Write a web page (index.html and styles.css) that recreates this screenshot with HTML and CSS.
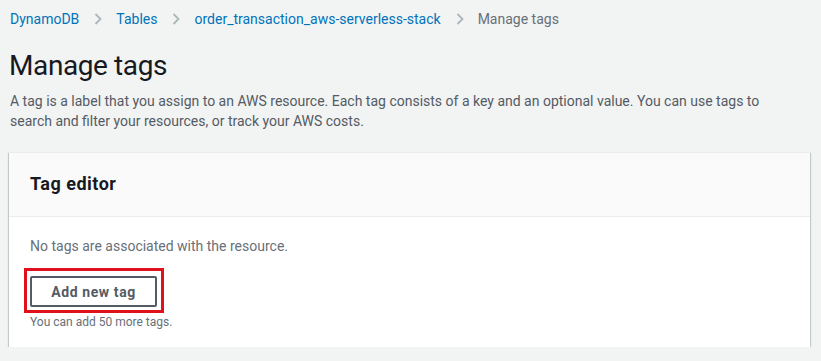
FILE: index.html
```html
<!DOCTYPE html>
<html lang="en">
<head>
    <meta charset="UTF-8">
    <meta name="viewport" content="width=device-width, initial-scale=1.0">
    <title>Manage tags</title>
    <link rel="stylesheet" href="styles.css">
</head>
<body>
    <nav class="breadcrumbs">
        <a href="#">DynamoDB</a>
        <svg class="chevron" width="8" height="12" viewBox="0 0 8 12"><path d="M1.5 1l5 5-5 5"/></svg>
        <a href="#">Tables</a>
        <svg class="chevron" width="8" height="12" viewBox="0 0 8 12"><path d="M1.5 1l5 5-5 5"/></svg>
        <a href="#">order_transaction_aws-serverless-stack</a>
        <svg class="chevron" width="8" height="12" viewBox="0 0 8 12"><path d="M1.5 1l5 5-5 5"/></svg>
        <span class="current">Manage tags</span>
    </nav>

    <h1>Manage tags</h1>
    <p class="description">A tag is a label that you assign to an AWS resource. Each tag consists of a key and an optional value. You can use tags to search and filter your resources, or track your AWS costs.</p>

    <div class="card">
        <div class="card-header">
            <h2>Tag editor</h2>
        </div>
        <div class="card-body">
            <p class="empty">No tags are associated with the resource.</p>
            <div class="highlight">
                <button class="add-button">Add new tag</button>
            </div>
            <p class="hint">You can add 50 more tags.</p>
        </div>
    </div>
</body>
</html>
```
FILE: styles.css
```css
body {
    font-family: Roboto, "Liberation Sans", sans-serif;
    font-size: 14px;
    margin: 0;
    padding: 0;
    background-color: #f2f3f3;
    color: #16191f;
}

.breadcrumbs {
    display: flex;
    align-items: center;
    padding: 9px 0 0 10px;
    line-height: 20px;
}

.breadcrumbs a {
    color: #0073bb;
    text-decoration: none;
}

.breadcrumbs .current {
    color: #687078;
}

.chevron {
    margin: 0 14px 0 15px;
}

.chevron path {
    fill: none;
    stroke: #aab7b8;
    stroke-width: 1.8;
}

h1 {
    font-size: 28px;
    font-weight: 400;
    letter-spacing: -0.4px;
    line-height: 34px;
    margin: 20px 0 0 9px;
    color: #16191f;
}

.description {
    margin: 8px 40px 0 10px;
    line-height: 20px;
    color: #545b64;
}

.card {
    margin: 21px 11px 0 9px;
    background-color: #fff;
    box-shadow: 0 1px 1px 0 rgba(0, 28, 36, 0.3), 1px 1px 1px 0 rgba(0, 28, 36, 0.15), -1px 1px 1px 0 rgba(0, 28, 36, 0.15);
    border-top: 1px solid #eaeded;
}

.card-header {
    background-color: #fafafa;
    padding: 20px 21px 21px;
    border-bottom: 1px solid #eaeded;
}

.card-header h2 {
    margin: 0;
    font-size: 18px;
    line-height: 22px;
    font-weight: 700;
    letter-spacing: 0.5px;
    color: #16191f;
}

.card-body {
    padding: 19px 21px 17px 15px;
}

.empty {
    margin: 0 0 12px 6px;
    line-height: 20px;
    color: #687078;
}

.highlight {
    display: inline-block;
    border: 3px solid #e0111c;
    padding: 5px 4px 3px 3px;
}

.add-button {
    display: block;
    width: 127px;
    height: 31px;
    background-color: #fff;
    border: 2px solid #545b64;
    border-radius: 2px;
    font-family: inherit;
    font-size: 14px;
    font-weight: 700;
    letter-spacing: 0.6px;
    color: #545b64;
    cursor: pointer;
    padding: 0;
}

.hint {
    margin: 1px 0 0 6px;
    font-size: 12px;
    line-height: 16px;
    color: #687078;
}
```
